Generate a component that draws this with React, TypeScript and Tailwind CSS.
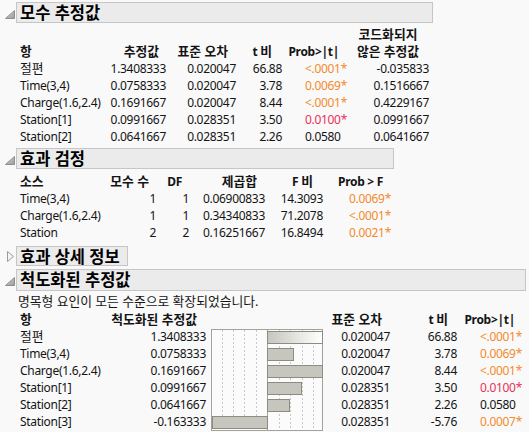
import React from "react";

type Sig = "o" | "r" | undefined;

function K({ children }: { children: React.ReactNode }) {
  return <span className="text-[12.8px] tracking-normal">{children}</span>;
}

function Pv({ v, c }: { v: string; c?: Sig }) {
  const cls = c === "o" ? "text-[#f28b2c]" : c === "r" ? "text-[#e8325a]" : "";
  return (
    <span className={cls}>
      {v}
      <span className={c ? "" : "invisible"}>*</span>
    </span>
  );
}

function Cell({ children, pr = "", left = false, bold = false }: { children: React.ReactNode; pr?: string; left?: boolean; bold?: boolean }) {
  return (
    <div className={`flex ${left ? "justify-start" : "justify-end"} whitespace-nowrap h-[17px] leading-[17px] ${pr} ${bold ? "font-bold" : ""}`}>
      {children}
    </div>
  );
}

function OpenTri() {
  return (
    <svg width="10" height="9" viewBox="0 0 10 9">
      <defs>
        <linearGradient id="tg" x1="0" y1="0" x2="1" y2="1">
          <stop offset="0" stopColor="#d8d8d8" />
          <stop offset="1" stopColor="#9a9a9a" />
        </linearGradient>
      </defs>
      <polygon points="9.5,0.5 9.5,8.5 0.5,8.5" fill="url(#tg)" stroke="#8e8e8e" strokeWidth="1" />
    </svg>
  );
}

function ClosedTri() {
  return (
    <svg width="8" height="11" viewBox="0 0 8 11">
      <polygon points="0.5,0.5 6.5,5.5 0.5,10.5" fill="#f4f4f4" stroke="#9a9a9a" strokeWidth="1" />
    </svg>
  );
}

function Header({ title, open = true, w, h }: { title: string; open?: boolean; w: string; h: string }) {
  return (
    <div className={`flex items-center ${h}`}>
      <div className={`w-[16px] flex ${open ? "pl-[5px] pt-[3px]" : "pl-[7px]"}`}>{open ? <OpenTri /> : <ClosedTri />}</div>
      <div className={`${w} h-full border border-[#c6c6c6] bg-[#ebebeb] pl-[3px] font-bold text-[16.5px] tracking-normal leading-[19px] text-black whitespace-nowrap`}>
        {title}
      </div>
    </div>
  );
}

function Chart() {
  const rows = [1.3408333, 0.0758333, 0.1691667, 0.0991667, 0.0641667, -0.163333];
  const zero = 56;
  const scale = 343;
  const grid = [11, 22, 33, 45, 68, 79, 91, 102];
  return (
    <svg width="112" height="102" viewBox="0 0 112 102" className="block">
      <defs>
        <linearGradient id="clipg" x1="0" y1="0" x2="1" y2="0">
          <stop offset="0" stopColor="#c6c6be" />
          <stop offset="1" stopColor="#ffffff" />
        </linearGradient>
      </defs>
      <rect x="0.5" y="0.5" width="111" height="101" fill="#fbfbfb" stroke="#a3a39a" />
      {grid.map((x) => (
        <line key={x} x1={x + 0.5} y1="1" x2={x + 0.5} y2="101" stroke="#c8c8c8" strokeDasharray="2 2" />
      ))}
      <line x1={zero + 0.5} y1="1" x2={zero + 0.5} y2="101" stroke="#a3a39a" />
      {rows.map((v, i) => {
        const end = Math.max(1, Math.min(111, zero + v * scale));
        const x0 = Math.min(zero, end);
        const x1 = Math.max(zero, end);
        const isGrad = i === 0;
        return (
          <rect
            key={i}
            x={x0 + 0.5}
            y={2 + i * 17 + 0.5}
            width={x1 - x0}
            height={12}
            fill={isGrad ? "url(#clipg)" : "#c6c6be"}
            stroke="#8c8c82"
          />
        );
      })}
    </svg>
  );
}

export default function App() {
  const t1 = [
    ["절편", "1.3408333", "0.020047", "66.88", "<.0001", "o", "-0.035833"],
    ["Time(3,4)", "0.0758333", "0.020047", "3.78", "0.0069", "o", "0.1516667"],
    ["Charge(1.6,2.4)", "0.1691667", "0.020047", "8.44", "<.0001", "o", "0.4229167"],
    ["Station[1]", "0.0991667", "0.028351", "3.50", "0.0100", "r", "0.0991667"],
    ["Station[2]", "0.0641667", "0.028351", "2.26", "0.0580", "", "0.0641667"],
  ];
  const t2 = [
    ["Time(3,4)", "1", "1", "0.06900833", "14.3093", "0.0069", "o"],
    ["Charge(1.6,2.4)", "1", "1", "0.34340833", "71.2078", "<.0001", "o"],
    ["Station", "2", "2", "0.16251667", "16.8494", "0.0021", "o"],
  ];
  const t4 = [
    ["절편", "1.3408333", "0.020047", "66.88", "<.0001", "o"],
    ["Time(3,4)", "0.0758333", "0.020047", "3.78", "0.0069", "o"],
    ["Charge(1.6,2.4)", "0.1691667", "0.020047", "8.44", "<.0001", "o"],
    ["Station[1]", "0.0991667", "0.028351", "3.50", "0.0100", "r"],
    ["Station[2]", "0.0641667", "0.028351", "2.26", "0.0580", ""],
    ["Station[3]", "-0.163333", "0.028351", "-5.76", "0.0007", "o"],
  ];
  const lab = (s: string) => (s === "절편" ? <K>{s}</K> : s);

  return (
    <div className="w-[529px] h-[432px] overflow-hidden bg-[#f9f9f9] text-[12px] tracking-[-0.3px] text-[#141414] font-['Segoe_UI','Noto_Sans','Noto_Sans_CJK_KR',sans-serif]">
      <div className="pt-[2px]">
        <Header title="모수 추정값" w="w-[417px]" h="h-[21px]" />
      </div>

      {/* Table 1 */}
      <div className="mt-[3px] pl-[20px] grid grid-cols-[80px_66px_70px_46px_65px_82px]">
        <div className="col-span-5 h-[17px]" />
        <Cell pr="pr-[7px]" bold>
          <span className="w-[68px] text-center"><K>코드화되지</K></span>
        </Cell>
        <Cell left bold><K>항</K></Cell>
        <Cell pr="pr-[7px]" bold><K>추정값</K></Cell>
        <Cell pr="pr-[8px]" bold><K>표준 오차</K></Cell>
        <Cell pr="pr-[10px]" bold>t&nbsp;<K>비</K></Cell>
        <Cell pr="pr-[8px]" bold>Prob&gt;|t|</Cell>
        <Cell pr="pr-[7px]" bold>
          <span className="w-[68px] text-center"><K>않은 추정값</K></span>
        </Cell>
        {t1.map((r) => (
          <React.Fragment key={r[0]}>
            <Cell left>{lab(r[0])}</Cell>
            <Cell>{r[1]}</Cell>
            <Cell>{r[2]}</Cell>
            <Cell>{r[3]}</Cell>
            <Cell>
              <Pv v={r[4]} c={(r[5] || undefined) as Sig} />
            </Cell>
            <Cell>{r[6]}</Cell>
          </React.Fragment>
        ))}
      </div>

      <div className="mt-[3px]">
        <Header title="효과 검정" w="w-[378px]" h="h-[21px]" />
      </div>

      {/* Table 2 */}
      <div className="mt-[4px] pl-[20px] grid grid-cols-[90px_46px_33px_76px_58px_68px]">
        <Cell left bold><K>소스</K></Cell>
        <Cell pr="pr-[7px]" bold><K>모수 수</K></Cell>
        <Cell pr="pr-[7px]" bold>DF</Cell>
        <Cell pr="pr-[8px]" bold><K>제곱합</K></Cell>
        <Cell pr="pr-[10px]" bold>F&nbsp;<K>비</K></Cell>
        <Cell pr="pr-[8px]" bold>Prob &gt; F</Cell>
        {t2.map((r) => (
          <React.Fragment key={r[0]}>
            <Cell left>{r[0]}</Cell>
            <Cell>{r[1]}</Cell>
            <Cell>{r[2]}</Cell>
            <Cell>{r[3]}</Cell>
            <Cell>{r[4]}</Cell>
            <Cell>
              <Pv v={r[5]} c={r[6] as Sig} />
            </Cell>
          </React.Fragment>
        ))}
      </div>

      <div className="mt-[5px]">
        <Header title="효과 상세 정보" open={false} w="w-[112px]" h="h-[20px]" />
      </div>
      <div className="mt-[3px]">
        <Header title="척도화된 추정값" w="w-[510px]" h="h-[22px]" />
      </div>

      <div className="pl-[18px] h-[17px] leading-[17px] mt-[2px]"><K>명목형 요인이 모든 수준으로 확장되었습니다.</K></div>

      {/* Table 4 */}
      <div className="mt-[1px] pl-[20px] grid grid-cols-[85px_101px_117px_67px_67px_65px] grid-rows-[17px_repeat(6,17px)]">
        <div className="col-start-3 row-start-2 row-span-6 pl-[5px] pt-[1px]">
          <Chart />
        </div>
        <Cell left bold><K>항</K></Cell>
        <Cell pr="pr-[9px]" bold><K>척도화된 추정값</K></Cell>
        <div />
        <Cell pr="pr-[8px]" bold><K>표준 오차</K></Cell>
        <Cell pr="pr-[9px]" bold>t&nbsp;<K>비</K></Cell>
        <Cell pr="pr-[7px]" bold>Prob&gt;|t|</Cell>
        {t4.map((r) => (
          <React.Fragment key={r[0]}>
            <Cell left>{lab(r[0])}</Cell>
            <Cell>{r[1]}</Cell>
            <Cell>{r[2]}</Cell>
            <Cell>{r[3]}</Cell>
            <Cell>
              <Pv v={r[4]} c={(r[5] || undefined) as Sig} />
            </Cell>
          </React.Fragment>
        ))}
      </div>
    </div>
  );
}
